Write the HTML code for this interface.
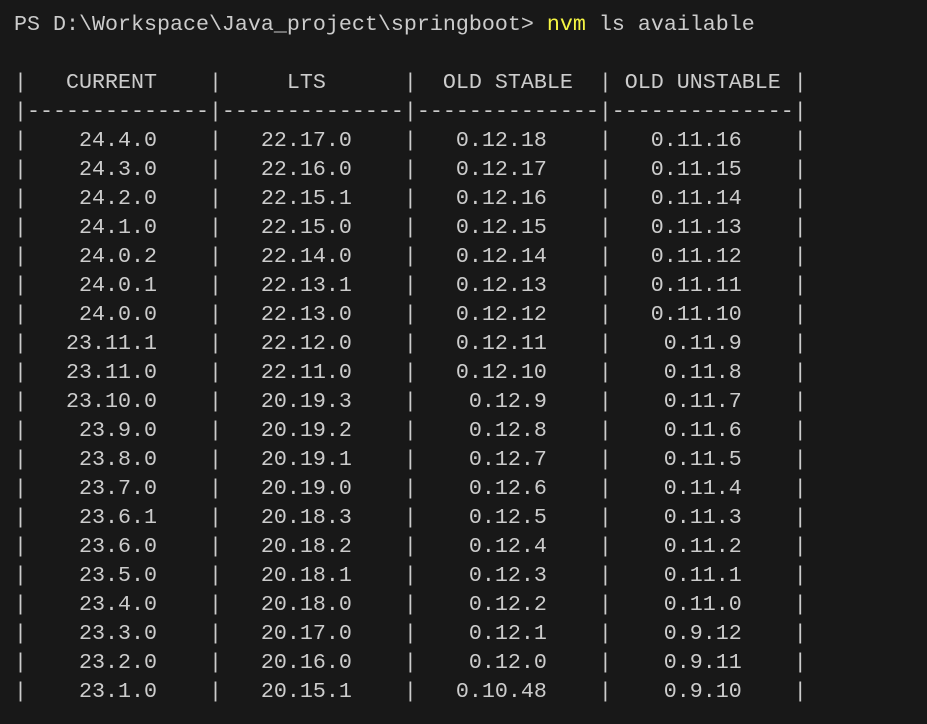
<!DOCTYPE html>
<html><head><meta charset="utf-8"><style>
html,body{margin:0;padding:0;background:#181818;width:927px;height:724px;overflow:hidden}
pre{margin:0;position:absolute;left:14px;top:10px;font-family:"Liberation Mono",monospace;font-size:21.67px;line-height:29px;color:#cccccc}
.y{color:#f5f543}
</style></head><body><pre>PS D:\Workspace\Java_project\springboot&gt; <span class="y">nvm</span> ls available

|   CURRENT    |     LTS      |  OLD STABLE  | OLD UNSTABLE |
|--------------|--------------|--------------|--------------|
|    24.4.0    |   22.17.0    |   0.12.18    |   0.11.16    |
|    24.3.0    |   22.16.0    |   0.12.17    |   0.11.15    |
|    24.2.0    |   22.15.1    |   0.12.16    |   0.11.14    |
|    24.1.0    |   22.15.0    |   0.12.15    |   0.11.13    |
|    24.0.2    |   22.14.0    |   0.12.14    |   0.11.12    |
|    24.0.1    |   22.13.1    |   0.12.13    |   0.11.11    |
|    24.0.0    |   22.13.0    |   0.12.12    |   0.11.10    |
|   23.11.1    |   22.12.0    |   0.12.11    |    0.11.9    |
|   23.11.0    |   22.11.0    |   0.12.10    |    0.11.8    |
|   23.10.0    |   20.19.3    |    0.12.9    |    0.11.7    |
|    23.9.0    |   20.19.2    |    0.12.8    |    0.11.6    |
|    23.8.0    |   20.19.1    |    0.12.7    |    0.11.5    |
|    23.7.0    |   20.19.0    |    0.12.6    |    0.11.4    |
|    23.6.1    |   20.18.3    |    0.12.5    |    0.11.3    |
|    23.6.0    |   20.18.2    |    0.12.4    |    0.11.2    |
|    23.5.0    |   20.18.1    |    0.12.3    |    0.11.1    |
|    23.4.0    |   20.18.0    |    0.12.2    |    0.11.0    |
|    23.3.0    |   20.17.0    |    0.12.1    |    0.9.12    |
|    23.2.0    |   20.16.0    |    0.12.0    |    0.9.11    |
|    23.1.0    |   20.15.1    |   0.10.48    |    0.9.10    |</pre></body></html>
